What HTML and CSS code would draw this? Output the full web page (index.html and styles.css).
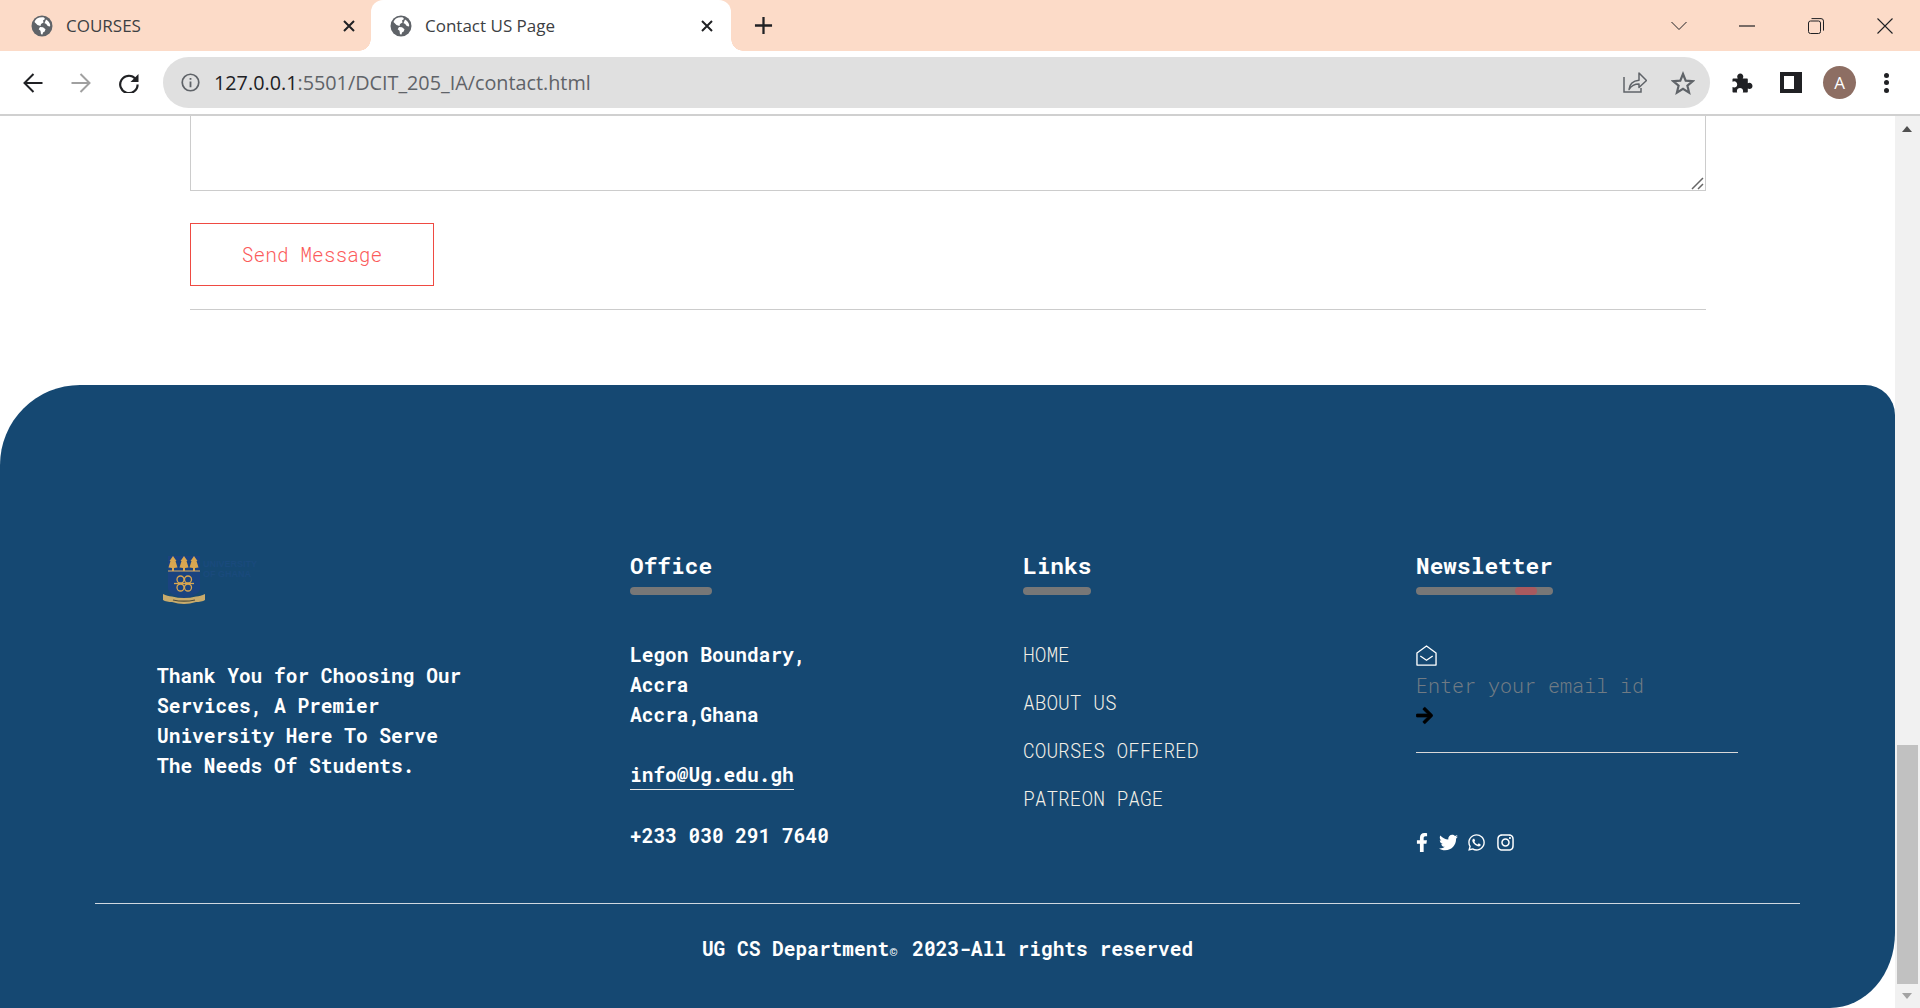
FILE: index.html
```html
<!DOCTYPE html>
<html lang="en">
<head>
<meta charset="utf-8">
<title>Contact US Page</title>
<link rel="stylesheet" href="styles.css">
</head>
<body>
<svg class="defs" width="0" height="0" aria-hidden="true">
  <symbol id="globe" viewBox="0 0 22 22"><circle cx="11" cy="11" r="10.500" fill="#5f6368"/><path fill="#fff" d="M6 3.500c2-1 4.500-1.500 7-1l1 1.500-2 1.500.5 2-2.500 1.500-.5 2-3-1-3-3C4 5.500 5 4.500 6 3.500zM9 12l3 .2 2.500 2-.8 2.300-1.700 1-.5 2-1.500-.2-.5-3.500-1.800-1.500zM15 4.500c2 1.200 3.800 3.200 4.200 5.500l-.2 1.500-2.200-.5-1.800-2.200-1.500-.5.800-2z"/></symbol>
  <symbol id="x-close" viewBox="0 0 14 14"><path d="M2 2l10 10M12 2L2 12" stroke="#202124" stroke-width="2" fill="none"/></symbol>
</svg>

<header class="chrome">
  <div class="tabstrip">
    <div class="tab">
      <svg class="favicon"><use href="#globe"/></svg>
      <span class="tab-title">COURSES</span>
      <svg class="tab-close"><use href="#x-close"/></svg>
    </div>
    <div class="tab tab-active">
      <svg class="favicon"><use href="#globe"/></svg>
      <span class="tab-title">Contact US Page</span>
      <svg class="tab-close"><use href="#x-close"/></svg>
    </div>
    <svg class="new-tab" viewBox="0 0 20 20"><path d="M10 1v18M1 10h18" stroke="#202124" stroke-width="2.400"/></svg>
    <div class="window-controls">
      <svg class="win-chevron" viewBox="0 0 16 10"><path d="M.5 1l7.500 7.500L15.500 1" fill="none" stroke="#202124"/></svg>
      <svg class="win-min" viewBox="0 0 16 2"><path d="M0 1h16" stroke="#202124" stroke-width="1.200"/></svg>
      <svg class="win-restore" viewBox="0 0 16 16"><rect x=".5" y="3" width="12" height="12.500" rx="2" fill="none" stroke="#202124"/><path d="M3.500 .6h9.500a2.500 2.500 0 0 1 2.500 2.500v9.500" fill="none" stroke="#202124"/></svg>
      <svg class="win-close" viewBox="0 0 16 16"><path d="M.5.500l15 15M15.500.500l-15 15" stroke="#202124" stroke-width="1.100"/></svg>
    </div>
  </div>
  <div class="toolbar">
    <svg class="nav-icon" viewBox="0 0 20 20"><path d="M19.500 10H2M10.500 1L1.500 10l9 9" fill="none" stroke="#202124" stroke-width="2"/></svg>
    <svg class="nav-icon" viewBox="0 0 20 20"><path d="M.5 10H18M9.500 1l9 9-9 9" fill="none" stroke="#a0a0a0" stroke-width="2"/></svg>
    <svg class="nav-icon" viewBox="0 0 20 20"><path d="M16.500 5.800A8.700 8.700 0 1 0 18.600 11.500" fill="none" stroke="#202124" stroke-width="2.200"/><path d="M19.500 1v8h-8z" fill="#202124"/></svg>
    <div class="omnibox">
      <svg class="info-icon" viewBox="0 0 20 20"><circle cx="10" cy="10" r="8.700" fill="none" stroke="#5f6368" stroke-width="1.800"/><path d="M10 9v6M10 5.200v2" stroke="#5f6368" stroke-width="1.900"/></svg>
      <span class="url"><span class="url-host">127.0.0.1</span>:5501/DCIT_205_IA/contact.html</span>
      <svg class="omni-icon" viewBox="0 0 24 24"><path d="M1 6v15h17v-4" fill="none" stroke="#5f6368" stroke-width="1.500"/><path d="M6 18.500C6.500 13.500 10 9.800 16 9.300V2l7.500 7.500L16 16.500v-3.400c-4 0-7.500 1.400-10 5.400z" fill="none" stroke="#5f6368" stroke-width="1.500" stroke-linejoin="round"/></svg>
      <svg class="omni-icon" viewBox="0 0 24 24"><path d="M12 3l2.700 6.600 7.100.5-5.400 4.600 1.700 6.900-6.100-3.700-6.100 3.700 1.700-6.900-5.400-4.600 7.100-.5z" fill="none" stroke="#5f6368" stroke-width="2.200"/></svg>
    </div>
    <svg class="ext-icon" viewBox="0 0 22 22"><path fill="#202124" d="M2.500 6.500h4.300c-.4-.6-.6-1.200-.6-1.900C6.200 2.900 7.500 1.500 9.300 1.500s3 1.400 3 3.100c0 .7-.2 1.300-.6 1.900h4.100c.6 0 1 .4 1 1v3.800c.5-.3 1-.5 1.600-.5 1.700 0 3.100 1.400 3.100 3.100s-1.400 3.100-3.100 3.100c-.6 0-1.100-.2-1.600-.5v3c0 .6-.4 1-1 1h-4c.2-.5.300-.9.300-1.400 0-1.700-1.400-3-3.100-3s-3.100 1.300-3.100 3c0 .5.100.9.300 1.400H2.500c-.6 0-1-.4-1-1V15c.5.300 1.100.5 1.700.5 1.700 0 3-1.400 3-3.100s-1.300-3.100-3-3.100c-.6 0-1.200.2-1.700.5V7.500c0-.6.400-1 1-1z"/></svg>
    <div class="side-panel"></div>
    <div class="avatar">A</div>
    <div class="kebab"><i></i><i></i><i></i></div>
  </div>
</header>

<div class="viewport">
  <div class="page">
    <main class="contact">
      <div class="message-wrap">
        <textarea class="message" aria-label="Message"></textarea>
        <svg class="resizer" viewBox="0 0 13 13"><path d="M1 12L12 1M7 12l5-5" stroke="#666" stroke-width="1.500" fill="none"/></svg>
      </div>
      <button class="send" type="button">Send Message</button>
      <div class="rule"></div>
    </main>

    <footer class="footer">
      <div class="footer-grid">
        <section class="col col-about">
          <svg class="logo" viewBox="0 0 120 66">
            <path d="M13 8H45V40Q45 47 29 50Q13 47 13 40Z" fill="#1a4380"/>
            <path d="M13 23H45" stroke="#dcb065" stroke-width="1"/>
            <g fill="#d9a650">
              <path transform="translate(18 0)" d="M0 8L3.500 13 2.500 13 4.500 19.500 1 20V23H-1V20L-4.500 19.500-2.500 13-3.500 13Z"/>
              <path transform="translate(29 0)" d="M0 8L3.500 13 2.500 13 4.500 19.500 1 20V23H-1V20L-4.500 19.500-2.500 13-3.500 13Z"/>
              <path transform="translate(39 0)" d="M0 8L3.500 13 2.500 13 4.500 19.500 1 20V23H-1V20L-4.500 19.500-2.500 13-3.500 13Z"/>
            </g>
            <g fill="none" stroke="#d9a650" stroke-width="1.300">
              <path d="M19 35.500H39"/>
              <circle cx="25.500" cy="31.500" r="3.500"/><circle cx="33" cy="31.500" r="3.500"/>
              <circle cx="25.500" cy="39.500" r="3.500"/><circle cx="33" cy="39.500" r="3.500"/>
            </g>
            <path d="M8 46c3 1.500 6 2.500 9 2.500 8 2 16 2 24 0 3 0 6-1 9-2.500v6c-2 1.500-6 2-9 2-8 2.500-16 2.500-24 0-3 0-7-.5-9-2z" fill="#c8ab6b"/>
            <path d="M18 52c7 1.500 15 1.500 22 0" fill="none" stroke="#4a4a3a" stroke-width="1.200"/>
            <text class="logo-text" x="48" y="19">UNIVERSITY</text>
            <text class="logo-text" x="48" y="29">OF GHANA</text>
          </svg>
          <p class="about">Thank You for Choosing Our Services, A Premier University Here To Serve The Needs Of Students.</p>
        </section>

        <section class="col">
          <h4 class="heading">Office<span class="bar"></span></h4>
          <p class="address">Legon Boundary,<br>Accra<br>Accra,Ghana</p>
          <p class="contact-line"><span class="email">info@Ug.edu.gh</span></p>
          <p class="phone">+233 030 291 7640</p>
        </section>

        <section class="col">
          <h4 class="heading">Links<span class="bar"></span></h4>
          <ul class="links">
            <li>HOME</li>
            <li>ABOUT US</li>
            <li>COURSES OFFERED</li>
            <li>PATREON PAGE</li>
          </ul>
        </section>

        <section class="col">
          <h4 class="heading">Newsletter<span class="bar"><span class="bar-dot"></span></span></h4>
          <form class="news-form">
            <svg class="news-envelope" viewBox="0 0 22 22"><path d="M1 8.300L11 1l10 7.300V21H1z" fill="none" stroke="#fff" stroke-width="1.400" stroke-linejoin="round"/><path d="M4.500 11.500L11 16l6.500-4.500" fill="none" stroke="#fff" stroke-width="1.400"/></svg>
            <div class="news-placeholder">Enter your email id</div>
            <svg class="news-arrow" viewBox="0 0 448 512"><path d="M190.500 66.900l22.200-22.200c9.400-9.400 24.600-9.400 33.900 0L441 239c9.400 9.400 9.400 24.600 0 33.900L246.600 467.300c-9.400 9.400-24.600 9.400-33.900 0l-22.200-22.200c-9.500-9.500-9.300-25 .4-34.300L311.400 296H24c-13.300 0-24-10.700-24-24v-32c0-13.300 10.700-24 24-24h287.400L190.900 101.200c-9.800-9.300-10-24.800-.4-34.300z"/></svg>
          </form>
          <div class="social">
            <svg class="s-fb" viewBox="0 0 320 512"><path d="M279.140 288l14.220-92.660h-88.910v-60.130c0-25.350 12.420-50.060 52.240-50.060h40.420V6.260S260.430 0 225.360 0c-73.220 0-121.080 44.380-121.080 124.720v70.620H22.890V288h81.390v224h100.170V288z"/></svg>
            <svg class="s-tw" viewBox="0 0 512 512"><path d="M459.370 151.716c.325 4.548.325 9.097.325 13.645 0 138.720-105.583 298.558-298.558 298.558-59.452 0-114.680-17.219-161.137-47.106 8.447.974 16.568 1.299 25.340 1.299 49.055 0 94.213-16.568 130.274-44.832-46.132-.975-84.792-31.188-98.112-72.772 6.498.974 12.995 1.624 19.818 1.624 9.421 0 18.843-1.300 27.614-3.573-48.081-9.747-84.143-51.980-84.143-102.985v-1.299c13.969 7.797 30.214 12.670 47.431 13.319-28.264-18.843-46.781-51.005-46.781-87.391 0-19.492 5.197-37.360 14.294-52.954 51.655 63.675 129.300 105.258 216.365 109.807-1.624-7.797-2.599-15.918-2.599-24.040 0-57.828 46.782-104.934 104.934-104.934 30.213 0 57.502 12.670 76.670 33.137 23.715-4.548 46.456-13.320 66.599-25.340-7.798 24.366-24.366 44.833-46.132 57.827 21.117-2.273 41.584-8.122 60.426-16.243-14.292 20.791-32.161 39.308-52.628 54.253z"/></svg>
            <svg class="s-wa" viewBox="0 0 448 512"><path d="M380.900 97.100C339 55.100 283.200 32 223.900 32c-122.400 0-222 99.600-222 222 0 39.100 10.200 77.300 29.600 111L0 480l117.700-30.900c32.400 17.700 68.900 27 106.100 27h.1c122.300 0 224.100-99.600 224.100-222 0-59.300-25.200-115-67.100-157zm-157 341.600c-33.200 0-65.700-8.900-94-25.700l-6.700-4-69.800 18.300L72 359.200l-4.400-7c-18.500-29.400-28.200-63.300-28.200-98.200 0-101.700 82.800-184.500 184.600-184.500 49.300 0 95.600 19.200 130.400 54.100 34.800 34.900 56.200 81.200 56.100 130.500 0 101.800-84.900 184.600-186.600 184.600zm101.200-138.200c-5.500-2.800-32.800-16.200-37.900-18-5.100-1.900-8.800-2.800-12.500 2.800-3.700 5.600-14.300 18-17.600 21.800-3.200 3.700-6.500 4.200-12 1.400-32.600-16.300-54-29.100-75.500-66-5.700-9.800 5.700-9.100 16.300-30.300 1.800-3.700.9-6.900-.5-9.700-1.400-2.800-12.500-30.100-17.100-41.200-4.500-10.800-9.100-9.300-12.500-9.500-3.200-.2-6.900-.2-10.600-.2-3.700 0-9.700 1.400-14.800 6.900-5.100 5.600-19.400 19-19.400 46.300 0 27.300 19.900 53.700 22.600 57.400 2.800 3.700 39.100 59.700 94.800 83.800 35.200 15.200 49 16.500 66.600 13.900 10.700-1.600 32.800-13.400 37.400-26.400 4.600-13 4.600-24.100 3.200-26.400-1.300-2.500-5-3.900-10.500-6.600z"/></svg>
            <svg class="s-ig" viewBox="0 0 448 512"><path d="M224.100 141c-63.600 0-114.900 51.300-114.900 114.900s51.300 114.900 114.900 114.900S339 319.500 339 255.900 287.700 141 224.100 141zm0 189.600c-41.100 0-74.700-33.500-74.700-74.700s33.500-74.700 74.700-74.700 74.700 33.500 74.700 74.700-33.600 74.700-74.700 74.700zm146.400-194.300c0 14.900-12 26.800-26.800 26.800-14.900 0-26.800-12-26.800-26.800s12-26.800 26.800-26.800 26.800 12 26.800 26.800zm76.100 27.200c-1.700-35.900-9.900-67.700-36.200-93.900-26.200-26.200-58-34.400-93.900-36.200-37-2.100-147.900-2.100-184.900 0-35.800 1.700-67.600 9.900-93.900 36.100s-34.400 58-36.200 93.900c-2.100 37-2.100 147.900 0 184.900 1.700 35.900 9.900 67.700 36.200 93.900s58 34.400 93.900 36.200c37 2.100 147.900 2.100 184.900 0 35.900-1.700 67.700-9.900 93.900-36.200 26.200-26.200 34.400-58 36.200-93.900 2.100-37 2.100-147.800 0-184.800zM398.800 388c-7.800 19.600-22.900 34.700-42.600 42.600-29.500 11.700-99.500 9-132.100 9s-102.700 2.600-132.100-9c-19.600-7.800-34.700-22.900-42.600-42.600-11.700-29.500-9-99.500-9-132.100s-2.600-102.700 9-132.100c7.800-19.600 22.900-34.700 42.600-42.600 29.500-11.700 99.500-9 132.100-9s102.700-2.600 132.100 9c19.600 7.800 34.700 22.900 42.600 42.600 11.700 29.500 9 99.500 9 132.100s2.700 102.700-9 132.100z"/></svg>
          </div>
        </section>
      </div>
      <div class="copyright">UG CS Department<span class="copy-mark">©</span> 2023-All rights reserved</div>
    </footer>
  </div>

  <div class="scrollbar">
    <span class="sb-up"></span>
    <span class="sb-track"><span class="sb-thumb"></span></span>
    <span class="sb-down"></span>
  </div>
</div>
</body>
</html>
```
FILE: styles.css
```css
* { box-sizing: border-box; }
html, body { margin: 0; height: 100%; overflow: hidden; }
body { display: flex; flex-direction: column; background: #fff; font-family: "Roboto Mono", "DejaVu Sans Mono", monospace; }
.defs { position: absolute; }

/* browser chrome */
.chrome { flex: 0 0 116px; display: flex; flex-direction: column; font-family: "Open Sans", "Noto Sans", sans-serif; }
.tabstrip { height: 51px; background: #fcdbc8; display: flex; align-items: center; }
.tab { width: 371px; height: 51px; display: flex; align-items: center; padding: 0 15px 0 31px; color: #3c4043; font-size: 17px; }
.tab-active { position: relative; width: 360px; padding: 0 17px 0 19px; background: #fff; border-radius: 12px 12px 0 0; }
.tab-active::before, .tab-active::after { content: ""; position: absolute; bottom: 0; width: 12px; height: 12px; }
.tab-active::before { left: -12px; background: radial-gradient(circle at 0 0, transparent 11.500px, #fff 12px); }
.tab-active::after { right: -12px; background: radial-gradient(circle at 100% 0, transparent 11.500px, #fff 12px); }
.favicon { width: 22px; height: 22px; margin-right: 13px; flex: none; }
.tab-title { flex: 1; white-space: nowrap; }
.tab-close { width: 14px; height: 14px; flex: none; }
.new-tab { width: 19px; height: 19px; margin-left: 23px; }
.window-controls { margin-left: auto; display: flex; align-items: center; }
.win-chevron { width: 16px; height: 10px; margin-right: 52px; }
.win-min { width: 16px; height: 2px; margin-right: 53px; }
.win-restore { width: 16px; height: 16px; margin-right: 53px; }
.win-close { width: 16px; height: 16px; margin-right: 27px; }

.toolbar { height: 65px; background: #fff; border-bottom: 2px solid #d0d0d0; display: flex; align-items: center; padding: 0 0 0 23px; }
.nav-icon { width: 20px; height: 20px; margin-right: 28px; flex: none; }
.nav-icon:nth-child(3) { margin-right: 24px; }
.omnibox { width: 1547px; height: 51px; background: #e0e0e0; border-radius: 26px; display: flex; align-items: center; padding: 0 15px 0 18px; flex: none; }
.info-icon { width: 19px; height: 19px; margin-right: 14px; flex: none; }
.url { flex: 1; font-size: 19.800px; color: #5f6368; white-space: nowrap; }
.url-host { color: #202124; }
.omni-icon { width: 24px; height: 24px; margin-left: 24px; flex: none; }
.ext-icon { width: 22px; height: 22px; margin-left: 21px; flex: none; }
.side-panel { width: 22px; height: 21px; margin-left: 27px; border: 4px solid #202124; border-right-width: 8px; background: #fff; flex: none; }
.avatar { width: 33px; height: 33px; margin-left: 21px; border-radius: 50%; background: #8d6e63; color: #fff; font-size: 17px; display: flex; align-items: center; justify-content: center; flex: none; }
.kebab { width: 5px; margin-left: 28px; display: flex; flex-direction: column; gap: 2.500px; flex: none; }
.kebab i { width: 5px; height: 5px; border-radius: 50%; background: #202124; }

/* page area */
.viewport { flex: 1; min-height: 0; display: flex; }
.page { flex: 1; min-width: 0; display: flex; flex-direction: column; overflow: hidden; }
.contact { padding: 0 189px 0 190px; }
.message-wrap { position: relative; height: 75px; }
.message { display: block; width: 100%; height: 75px; margin: 0; border: 1px solid #ccc; border-top: 0; outline: 0; background: #fff; resize: none; }
.resizer { position: absolute; right: 2px; bottom: 1px; width: 13px; height: 13px; }
.send { display: block; width: 244px; height: 63px; margin-top: 32px; background: #fff; border: 1px solid #ef4a42; color: #fb5b5b; font: 300 19.500px "Roboto Mono", "DejaVu Sans Mono", monospace; }
.rule { height: 1px; margin-top: 23px; background: #ccc; }

.footer { flex: 1; margin-top: 75px; background: #154872; border-radius: 80px 30px 65px 0 / 80px 30px 75px 0; color: #fff; padding: 159px 95px 0; }
.footer-grid { display: grid; grid-template-columns: 473px 393px 393px 1fr; padding-left: 62px; height: 360px; border-bottom: 1px solid #cfd8e0; font-size: 19.500px; line-height: 30px; }
.col { min-width: 0; }
.logo { display: block; width: 120px; height: 66px; margin: 4px 0 0 -2px; }
.logo-text { font: 700 9px "Liberation Sans", sans-serif; fill: #1a4a7c; }
.about { margin: 47px 0 0; width: 320px; font-weight: 700; }
.heading { margin: 4px 0 0; font-size: 22.800px; line-height: 34px; font-weight: 700; width: max-content; }
.bar { display: block; position: relative; height: 8px; margin-top: 5px; background: #777; border-radius: 4px; }
.bar-dot { position: absolute; left: 99px; width: 22px; height: 8px; background: #a85a5f; border-radius: 4px; }
.address { margin: 45px 0 0; font-weight: 700; }
.contact-line { margin: 30px 0 0; font-weight: 700; }
.email { display: inline-block; line-height: 29px; border-bottom: 1px solid #e8e8e8; }
.phone { margin: 31px 0 0; font-weight: 700; }
.links { list-style: none; margin: 45px 0 0; padding: 0; color: #f2efe6; font-weight: 300; }
.links li { height: 48px; }
.news-form { width: 322px; height: 113px; margin-top: 45px; padding-top: 5px; border-bottom: 1px solid #d8d8d8; }
.news-envelope { display: block; width: 21px; height: 21px; }
.news-placeholder { height: 30px; margin-top: 4px; font-size: 20px; color: #707b84; font-weight: 300; }
.news-arrow { display: block; width: 17px; height: 19px; margin-top: 6px; fill: #000; stroke: #000; stroke-width: 20px; }
.social { display: flex; align-items: center; margin-top: 80px; fill: #fff; }
.s-fb { width: 12px; height: 19px; margin-right: 11px; }
.s-tw { width: 19px; height: 19px; margin-right: 10px; }
.s-wa { width: 17px; height: 19px; margin-right: 12px; }
.s-ig { width: 17px; height: 19px; }
.copyright { text-align: center; font-size: 19.500px; line-height: 30px; font-weight: 700; margin-top: 30px; }
.copy-mark { font-size: 14px; letter-spacing: 3px; }

/* scrollbar */
.scrollbar { flex: 0 0 25px; background: #f1f1f1; display: flex; flex-direction: column; align-items: center; }
.sb-up { flex: none; height: 26px; width: 100%; position: relative; }
.sb-up::after { content: ""; position: absolute; left: 7px; top: 10px; border: 5.500px solid transparent; border-top: 0; border-bottom: 6px solid #505050; }
.sb-track { flex: 1; width: 100%; display: flex; flex-direction: column; justify-content: flex-end; }
.sb-thumb { height: 239px; margin: 0 2px; background: #c1c1c1; }
.sb-down { flex: none; height: 24px; width: 100%; position: relative; }
.sb-down::after { content: ""; position: absolute; left: 7px; top: 9px; border: 5.500px solid transparent; border-bottom: 0; border-top: 6px solid #a3a3a3; }
```
